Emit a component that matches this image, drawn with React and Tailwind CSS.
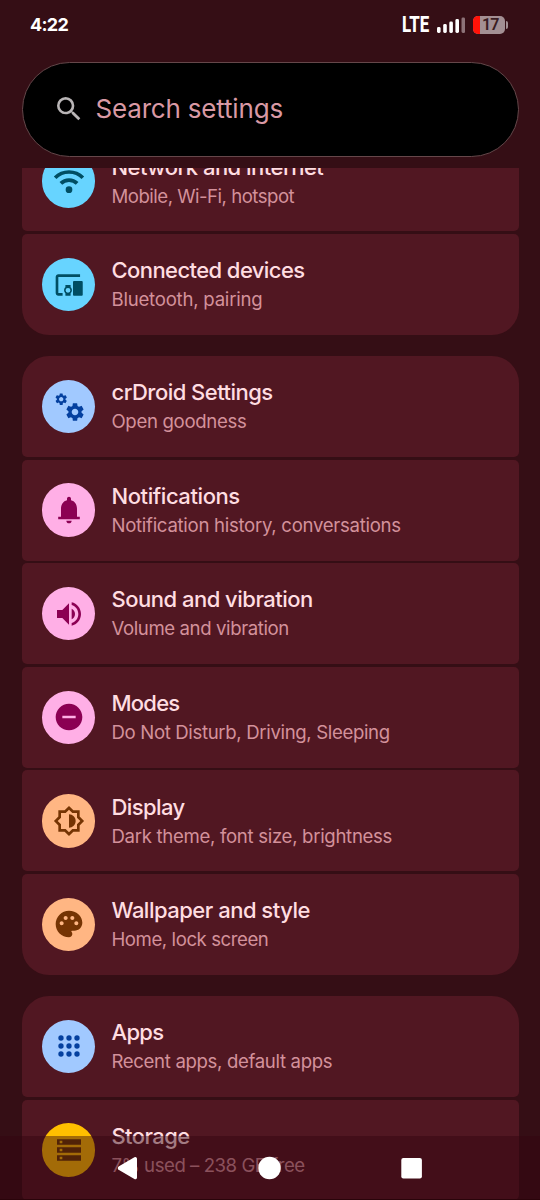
import React from "react";
import { MdSearch, MdSettings, MdVolumeUp, MdDoNotDisturbOn } from "react-icons/md";

function Glyph({ children }) {
  return (
    <svg viewBox="0 0 24 24" className="size-8" fill="currentColor">
      {children}
    </svg>
  );
}

const wifi = (
  <Glyph>
    <g fill="none" stroke="currentColor" strokeWidth="2.8">
      <path d="M1.6 9.6a14.6 14.6 0 0 1 20.8 0" />
      <path d="M5.9 13.8a8.6 8.6 0 0 1 12.2 0" />
    </g>
    <circle cx="12" cy="18.5" r="2.5" />
  </Glyph>
);

const devices = (
  <Glyph>
    <path d="M4 6h16.3V4H4c-1.1 0-2 .9-2 2v12c0 1.1.9 2 2 2h3.2v-2H4z" />
    <path
      fillRule="evenodd"
      d="M13.2 12H9.3v1.78c-.61.55-1 1.33-1 2.22s.39 1.67 1 2.22V20h3.9v-1.78c.61-.55 1-1.34 1-2.22s-.39-1.67-1-2.22zM11.25 14.2a1.8 1.8 0 1 1 0 3.6 1.8 1.8 0 0 1 0-3.6z"
    />
    <rect x="15" y="9" width="7.3" height="11" rx=".7" />
  </Glyph>
);

const gears = (
  <span className="flex h-[27px] w-[27px] items-start justify-between">
    <MdSettings className="-mt-px -ml-px size-[14.4px] shrink-0" />
    <MdSettings className="mt-[8px] -ml-[5px] size-[22px] shrink-0" />
  </span>
);

const bell = (
  <Glyph>
    <path d="M18 17v-6c0-3.07-1.63-5.64-4.5-6.32V3.5c0-.83-.67-1.5-1.5-1.5s-1.5.67-1.5 1.5v1.18C7.64 5.36 6 7.92 6 11v6H3.9v2h16.2v-2zM12 22c1.1 0 2-.9 2-2h-4c0 1.1.9 2 2 2z" />
  </Glyph>
);

const display = (
  <Glyph>
    <path d="M20 8.69V4h-4.69L12 .69 8.69 4H4v4.69L.69 12 4 15.31V20h4.69L12 23.31 15.31 20H20v-4.69L23.31 12 20 8.69zm-2 5.79V18h-3.52L12 20.48 9.52 18H6v-3.52L3.52 12 6 9.52V6h3.52L12 3.52 14.48 6H18v3.52L20.48 12 18 14.48zM12 7v10c2.76 0 5-2.24 5-5s-2.24-5-5-5z" />
  </Glyph>
);

const palette = (
  <Glyph>
    <path d="M12 2C6.49 2 2 6.49 2 12s4.49 10 10 10c1.38 0 2.5-1.12 2.5-2.5 0-.61-.23-1.2-.64-1.67-.08-.1-.13-.21-.13-.33 0-.28.22-.5.5-.5H16c3.31 0 6-2.69 6-6 0-4.96-4.49-9-10-9zm5.5 11c-.83 0-1.5-.67-1.5-1.5s.67-1.5 1.5-1.5 1.5.67 1.5 1.5-.67 1.5-1.5 1.5zm-3-4c-.83 0-1.5-.67-1.5-1.5S13.67 6 14.5 6s1.5.67 1.5 1.5S15.33 9 14.5 9zM5 11.5c0-.83.67-1.5 1.5-1.5s1.5.67 1.5 1.5S7.33 13 6.5 13 5 12.33 5 11.5zm6-4c0 .83-.67 1.5-1.5 1.5S8 8.33 8 7.5 8.67 6 9.5 6s1.5.67 1.5 1.5z" />
  </Glyph>
);

const apps = (
  <Glyph>
    {[6, 12, 18].map((y) => [6, 12, 18].map((x) => <circle key={`${x}-${y}`} cx={x} cy={y} r="2" />))}
  </Glyph>
);

const storage = (
  <Glyph>
    <path
      fillRule="evenodd"
      d="M3 4h18v4H3zM5 5v2h2V5zM3 10h18v4H3zM5 11v2h2v-2zM3 16h18v4H3zM5 17v2h2v-2z"
    />
  </Glyph>
);

const cyan = "bg-[#67d4ff] text-[#004e63]";
const blue = "bg-[#a1c9ff] text-[#04409f]";
const pink = "bg-[#ffafe6] text-[#8b0053]";
const orange = "bg-[#ffb683] text-[#753403]";

const groups = [
  {
    corners: "rounded-[27px]",
    rows: [
      { icon: wifi, tone: cyan, title: "Network and internet", sub: "Mobile, Wi-Fi, hotspot", tt: "tracking-[-0.52px]", st: "tracking-[-0.5px]" },
      { icon: devices, tone: cyan, title: "Connected devices", sub: "Bluetooth, pairing", tt: "tracking-[-0.58px]", st: "tracking-[-0.23px]" },
    ],
  },
  {
    corners: "rounded-[27px]",
    rows: [
      { icon: gears, tone: blue, title: "crDroid Settings", sub: "Open goodness", tt: "tracking-[-0.53px]", st: "tracking-[-0.33px]" },
      { icon: bell, tone: pink, title: "Notifications", sub: "Notification history, conversations", tt: "tracking-[-0.42px]", st: "tracking-[-0.29px]" },
      { icon: <MdVolumeUp className="size-8" />, tone: pink, title: "Sound and vibration", sub: "Volume and vibration", tt: "tracking-[-0.5px]", st: "tracking-[-0.4px]" },
      { icon: <MdDoNotDisturbOn className="size-8" />, tone: pink, title: "Modes", sub: "Do Not Disturb, Driving, Sleeping", tt: "tracking-[-0.75px]", st: "tracking-[-0.35px]" },
      { icon: display, tone: orange, title: "Display", sub: "Dark theme, font size, brightness", tt: "tracking-[-0.6px]", st: "tracking-[-0.31px]" },
      { icon: palette, tone: orange, title: "Wallpaper and style", sub: "Home, lock screen", tt: "tracking-[-0.5px]", st: "tracking-[-0.43px]" },
    ],
  },
  {
    corners: "rounded-t-[27px]",
    rows: [
      { icon: apps, tone: blue, title: "Apps", sub: "Recent apps, default apps", tt: "tracking-[-0.7px]", st: "tracking-[-0.34px]" },
      { icon: storage, tone: "bg-[#ffbf00] text-[#6a3b00]", title: "Storage", sub: "7% used – 238 GB free", tt: "tracking-[-0.6px]", st: "tracking-[-0.46px]" },
    ],
  },
];

function Row({ icon, tone, title, sub, tt, st }) {
  return (
    <li className="flex h-[100.9px] shrink-0 items-center gap-4 rounded-[5px] bg-[#511722] pl-[20.6px]">
      <span className={`flex size-[53.4px] shrink-0 items-center justify-center rounded-full ${tone}`}>{icon}</span>
      <span className="flex flex-col pt-[1.4px] whitespace-nowrap">
        <span className={`text-[22px] leading-[29px] font-medium text-[#ffdde1] ${tt}`}>{title}</span>
        <span className={`text-[18.6px] leading-[29px] text-[#d3919b] ${st}`}>{sub}</span>
      </span>
    </li>
  );
}

function StatusBar() {
  return (
    <div className="flex h-[50px] shrink-0 items-center justify-between pr-[32px] pl-[30px] text-white">
      <span className="text-[18px] leading-none font-bold tracking-[-0.7px]">4:22</span>
      <div className="flex items-center">
        <span className="mr-[7px] w-[28px] origin-left scale-x-[0.78] font-['Roboto',sans-serif] text-[21.5px] leading-none font-extrabold">LTE</span>
        <svg viewBox="0 0 28 17" className="mr-[8.5px] h-[17px] w-[28px]" fill="#fff">
          <rect x="0" y="10" width="3.6" height="6" rx="1.4" />
          <rect x="6.2" y="7" width="3.6" height="9" rx="1.4" />
          <rect x="12.3" y="4.5" width="3.6" height="11.5" rx="1.4" />
          <rect x="18.4" y="2" width="3.6" height="14" rx="1.4" />
          <rect x="24.5" y=".5" width="3.6" height="15.5" rx="1.4" fill="#8d7278" />
        </svg>
        <div className="flex h-[18px] w-[32px] items-center overflow-hidden rounded-[5px] bg-[#a38f93]">
          <span className="h-full w-[7px] bg-[#ff1208]" />
          <span className="pl-[2px] font-['Roboto',sans-serif] text-[16px] leading-none font-semibold tracking-[-1px] text-[#3a1c22]">17</span>
        </div>
        <span className="ml-[0.5px] h-[8px] w-[2.5px] rounded-r-[2px] bg-[#a38f93]" />
      </div>
    </div>
  );
}

export default function App() {
  return (
    <div className="relative flex h-[1200px] w-[540px] flex-col overflow-hidden bg-[#350e15] font-['Inter',sans-serif]">
      <StatusBar />
      <div className="mx-[21.5px] mt-[11.5px] flex h-[95px] shrink-0 items-center gap-[11px] rounded-full border border-[#65474a] bg-black pl-[30px]">
        <MdSearch className="size-8 text-[#b9b5b6]" />
        <span className="text-[26px] leading-none tracking-[-0.18px] whitespace-nowrap text-[#d999a4]">Search settings</span>
      </div>
      <main className="mt-[11px] flex h-[1032.5px] shrink-0 flex-col overflow-hidden px-[21.5px]">
        <div className="-mt-[37px] flex flex-col gap-[21.1px]">
          {groups.map(({ corners, rows }, i) => (
            <ul key={i} className={`flex shrink-0 flex-col gap-[2.7px] overflow-hidden ${corners}`}>
              {rows.map((row) => (
                <Row key={row.title} {...row} />
              ))}
            </ul>
          ))}
        </div>
      </main>
      <nav className="absolute inset-x-0 bottom-0 h-16 border-b border-[#2a040a] bg-[#34050f]/45">
        <svg viewBox="0 0 540 64" className="h-16 w-full" fill="#fff">
          <path d="M119 30.2 134.4 21.3a1.7 1.7 0 0 1 2.6 1.5V41.4a1.7 1.7 0 0 1-2.6 1.5L119 34.1a2.2 2.2 0 0 1 0-3.9z" />
          <circle cx="269.5" cy="32" r="11.2" />
          <rect x="401.3" y="22" width="20.6" height="20.6" rx="2" />
        </svg>
      </nav>
    </div>
  );
}
